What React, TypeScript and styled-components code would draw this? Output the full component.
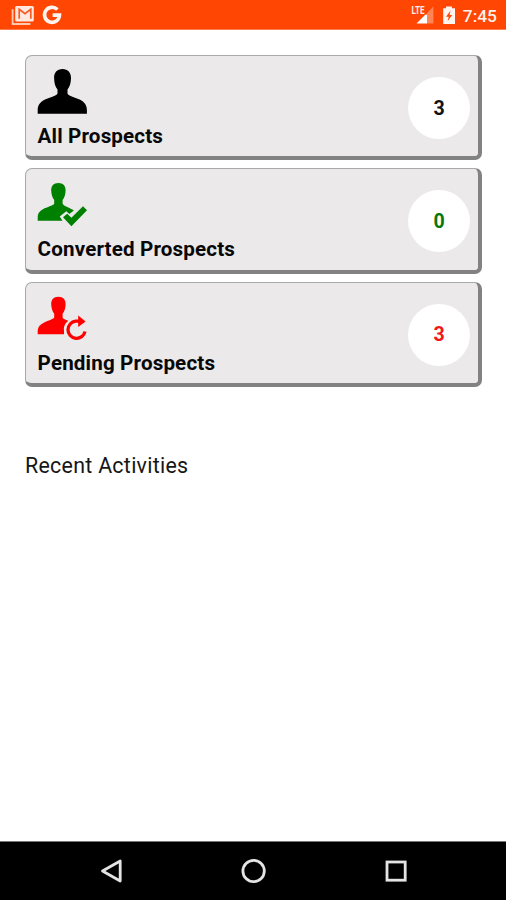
import React from "react";
import styled, { createGlobalStyle } from "styled-components";

const GlobalStyle = createGlobalStyle`
  * { box-sizing: border-box; }
  body { margin: 0; background: #fff; font-family: Roboto, "Liberation Sans", sans-serif; }
  svg { display: block; }
`;

const Screen = styled.div`
  width: 506px;
  height: 900px;
  display: flex;
  flex-direction: column;
  overflow: hidden;
  background: #fff;
`;

const StatusBar = styled.header`
  height: 30px;
  flex: none;
  display: flex;
  justify-content: space-between;
  padding: 0 9px 0 11px;
  background: #ff4602;
  border-bottom: 1px solid #ff7c4c;
`;

const StatusGroup = styled.div`
  display: flex;
`;

const Time = styled.time`
  margin: 6px 0 0 7px;
  font-size: 17.4px;
  line-height: 21px;
  font-weight: 500;
  color: #fff2ec;
`;

const Content = styled.main`
  flex: 1;
  padding: 25px 24px 0 25px;
`;

const CardList = styled.div`
  display: flex;
  flex-direction: column;
  gap: 8px;
`;

const Card = styled.section`
  height: 105.4px;
  display: flex;
  justify-content: space-between;
  padding: 0 8px 0 11px;
  background: #ebe9ea;
  border: solid #828282;
  border-width: 1px 4px 4px 1px;
  border-top-color: #a9a9a9;
  border-left-color: #a9a9a9;
  border-radius: 7px;
`;

const CardInfo = styled.div`
  padding-top: 12px;
`;

const CardTitle = styled.h2`
  margin: 8px 0 0 0.6px;
  font-size: 20.6px;
  line-height: 26px;
  font-weight: 700;
  letter-spacing: 0.15px;
  white-space: nowrap;
  color: #080808;
`;

const Count = styled.div<{ $color: string }>`
  width: 62px;
  height: 62px;
  margin-top: 21px;
  display: flex;
  align-items: center;
  justify-content: center;
  border-radius: 50%;
  background: #fff;
  color: ${(p) => p.$color};
  font-size: 19.6px;
  font-weight: 700;
`;

const SectionTitle = styled.h3`
  margin: 64.5px 0 0;
  font-size: 21.4px;
  line-height: 28px;
  font-weight: 400;
  letter-spacing: 0.28px;
  color: #161616;
`;

const NavBar = styled.nav`
  height: 59px;
  flex: none;
  background: #000;
  border-top: 1px solid #777;
`;

const NotificationIcons = () => (
  <svg width="52" height="29" viewBox="11 0 52 29" fill="#ffe9df">
    <path d="M12.6 9.2V24H30.4" fill="none" stroke="#ffc8b3" strokeWidth="1.8" />
    <rect x="15.2" y="6" width="18.6" height="15.6" rx="1.5" />
    <path d="M19.2 18.7V9.2L25 13.6L30.8 9.2V18.7" fill="none" stroke="#f65a27" strokeWidth="1.7" />
    <path d="M57.4 9.6A7.5 7.5 0 1 0 59.5 15.1H52.6" fill="none" stroke="#fff4ef" strokeWidth="3.6" />
  </svg>
);

const SystemIcons = () => (
  <svg width="46" height="29" viewBox="409 0 46 29">
    <text x="410.6" y="14.4" fontSize="11.2" fontWeight="700" fill="#fff0e9" textLength="13" lengthAdjust="spacingAndGlyphs">
      LTE
    </text>
    <path d="M432.4 6.5V23.5H426V13Z" fill="#ff8456" />
    <path d="M426 14.5V23.5H415.5L424.5 14.5Z" fill="#fff" />
    <path d="M445 6.4H451V8.3H454V24H442.2V8.3H445Z" fill="#fff4ef" />
    <path d="M449.6 10.4L445 16.7H447.7L446.6 21.2L451.2 14.9H448.5Z" fill="#ff4602" />
  </svg>
);

const ProspectIcon = () => (
  <svg width="51" height="47" viewBox="0 0 51 47">
    <path
      d="M25.5 1C20 1 16.8 4.8 17.1 10.2C17.3 15 18.2 18.8 20.5 21.6V25.5C19.5 28 12 29.4 7.5 31.8C2.8 34.3.7 37.5.7 42V45.7H49.9V42C49.9 37.5 47.8 34.3 43.2 31.8C38.5 29.4 31.3 28 30.5 25.5V21.6C32.8 18.8 33.8 15 34 10.2C34.2 4.8 31 1 25.5 1Z"
      fill="#000"
    />
  </svg>
);

const ConvertedIcon = () => (
  <svg width="51" height="47" viewBox="0 0 51 47">
    <path
      d="M21.4 2C16.5 2 14 5 14.2 9.5C14.4 13.5 15.2 16.5 17.2 19V22.8C16.2 24.6 10 26 6 28.2C2 30.3.7 33 .7 36.5V39.7H25.5L22.7 35.4L29.3 30.3L32.4 33L36.8 29.5C33.5 27 26.4 25 25.6 22.8V19C27.6 16.5 28.5 13.5 28.6 9.5C28.8 5 26.3 2 21.4 2Z"
      fill="#008000"
    />
    <path d="M26 36.3L30.2 32.7L34.4 36.7L46 25.2L50 29.2L34.4 45.2Z" fill="#008000" />
  </svg>
);

const PendingIcon = () => (
  <svg width="51" height="47" viewBox="0 0 51 47">
    <path
      d="M21.4 1.8C16.5 1.8 14 4.8 14.2 9.3C14.4 13.3 15.2 16.3 17.2 18.8V22.6C16.2 24.5 10 26 6 28.2C2 30.3.7 33 .7 36.3V39.2H27V35.5C26.3 31.3 28.4 28.1 31.3 25.7C28.5 24.8 26 24 25.6 22.6V18.8C27.6 16.3 28.5 13.3 28.6 9.3C28.8 4.8 26.3 1.8 21.4 1.8Z"
      fill="#f00"
    />
    <path d="M42 26.2H38.7A8.6 8.6 0 1 0 48 36.5" fill="none" stroke="#f00" strokeWidth="3.3" />
    <path d="M41.2 20.4L48.6 26.5L41.2 32Z" fill="#f00" />
  </svg>
);

const cards = [
  { title: "All Prospects", count: 3, color: "#111", Icon: ProspectIcon },
  { title: "Converted Prospects", count: 0, color: "#087808", Icon: ConvertedIcon },
  { title: "Pending Prospects", count: 3, color: "#f21616", Icon: PendingIcon },
];

export default function App() {
  return (
    <Screen>
      <GlobalStyle />
      <StatusBar>
        <NotificationIcons />
        <StatusGroup>
          <SystemIcons />
          <Time>7:45</Time>
        </StatusGroup>
      </StatusBar>
      <Content>
        <CardList>
          {cards.map(({ title, count, color, Icon }) => (
            <Card key={title}>
              <CardInfo>
                <Icon />
                <CardTitle>{title}</CardTitle>
              </CardInfo>
              <Count $color={color}>{count}</Count>
            </Card>
          ))}
        </CardList>
        <SectionTitle>Recent Activities</SectionTitle>
      </Content>
      <NavBar>
        <svg width="506" height="58" viewBox="0 0 506 58" fill="none" stroke="#e4e4e4" strokeWidth="2.8">
          <path d="M120.2 19V39L102.5 29Z" strokeLinejoin="round" />
          <circle cx="253.6" cy="29" r="10.7" />
          <rect x="387" y="20" width="18.2" height="18.2" />
        </svg>
      </NavBar>
    </Screen>
  );
}
